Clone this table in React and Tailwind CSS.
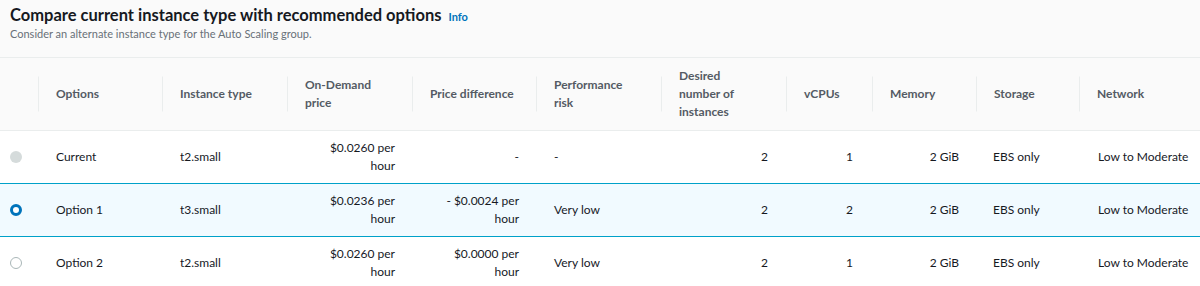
const columns = [
  { label: [], width: "w-[38px]" },
  { label: ["Options"], width: "w-[124px]" },
  { label: ["Instance type"], width: "w-[125px]" },
  { label: ["On-Demand", "price"], width: "w-[125px]" },
  { label: ["Price difference"], width: "w-[124px]" },
  { label: ["Performance", "risk"], width: "w-[125px]" },
  { label: ["Desired", "number of", "instances"], width: "w-[125px]" },
  { label: ["vCPUs"], width: "w-[86px]" },
  { label: ["Memory"], width: "w-[104px]" },
  { label: ["Storage"], width: "w-[103px]" },
  { label: ["Network"], width: "w-[121px]" },
];

const rows = [
  {
    state: "disabled",
    option: "Current",
    type: "t2.small",
    price: ["$0.0260 per", "hour"],
    diff: ["-"],
    risk: "-",
    desired: 2,
    vcpus: 1,
  },
  {
    state: "selected",
    option: "Option 1",
    type: "t3.small",
    price: ["$0.0236 per", "hour"],
    diff: ["- $0.0024 per", "hour"],
    risk: "Very low",
    desired: 2,
    vcpus: 2,
  },
  {
    state: "idle",
    option: "Option 2",
    type: "t2.small",
    price: ["$0.0260 per", "hour"],
    diff: ["$0.0000 per", "hour"],
    risk: "Very low",
    desired: 2,
    vcpus: 1,
  },
];

function Radio({ state }) {
  if (state === "selected") {
    return <span className="block h-3 w-3 rounded-full border-[3.5px] border-[#0073bb] bg-white" />;
  }
  if (state === "disabled") {
    return <span className="block h-3 w-3 rounded-full bg-[#d5dbdb]" />;
  }
  return <span className="block h-3 w-3 rounded-full border border-[#aab7b8] bg-white" />;
}

function Lines({ lines }) {
  return lines.map((line, i) => (
    <span key={i} className="block">
      {line}
    </span>
  ));
}

export default function App() {
  return (
    <div className="h-[286px] w-[1200px] overflow-hidden bg-white font-['Lato','Open_Sans',sans-serif] text-[#16191f]">
      <div className="border-b border-[#eaeded] bg-[#fafafa] px-[10px] pb-[16px] pt-[3px]">
        <div className="flex items-baseline gap-[7px]">
          <h2 className="text-[16.5px] font-bold leading-[24px] text-[#16191f]">
            Compare current instance type with recommended options
          </h2>
          <a className="text-[11px] font-bold text-[#0073bb]">Info</a>
        </div>
        <p className="text-[11px] leading-[14px] text-[#687078]">
          Consider an alternate instance type for the Auto Scaling group.
        </p>
      </div>
      <table className="w-full table-fixed border-collapse text-[12px] leading-[18px]">
        <thead>
          <tr className="h-[72px] border-b border-[#eaeded] bg-[#fafafa]">
            {columns.map((col, i) => (
              <th
                key={i}
                className={`${col.width} relative py-0 pl-[18px] pr-2 text-left align-middle font-bold text-[#545b64] ${
                  i > 0
                    ? "before:absolute before:left-0 before:top-1/2 before:h-[35px] before:w-px before:-translate-y-1/2 before:bg-[#eaeded]"
                    : ""
                }`}
              >
                <Lines lines={col.label} />
              </th>
            ))}
          </tr>
        </thead>
        <tbody>
          {rows.map((row, i) => (
            <tr
              key={i}
              className={
                row.state === "selected"
                  ? "h-[53px] border-y border-[#00a1c9] bg-[#f1faff]"
                  : "h-[53px]"
              }
            >
              <td className="pl-[10px]">
                <Radio state={row.state} />
              </td>
              <td className="pl-[18px]">{row.option}</td>
              <td className="pl-[18px]">{row.type}</td>
              <td className="pr-[17px] text-right">
                <Lines lines={row.price} />
              </td>
              <td className="pr-[17px] text-right">
                <Lines lines={row.diff} />
              </td>
              <td className="pl-[18px]">{row.risk}</td>
              <td className="pr-[18px] text-right">{row.desired}</td>
              <td className="pr-[19px] text-right">{row.vcpus}</td>
              <td className="pr-[17px] text-right">2 GiB</td>
              <td className="pl-[17px]">EBS only</td>
              <td className="whitespace-nowrap pl-[19px]">Low to Moderate</td>
            </tr>
          ))}
        </tbody>
      </table>
    </div>
  );
}
